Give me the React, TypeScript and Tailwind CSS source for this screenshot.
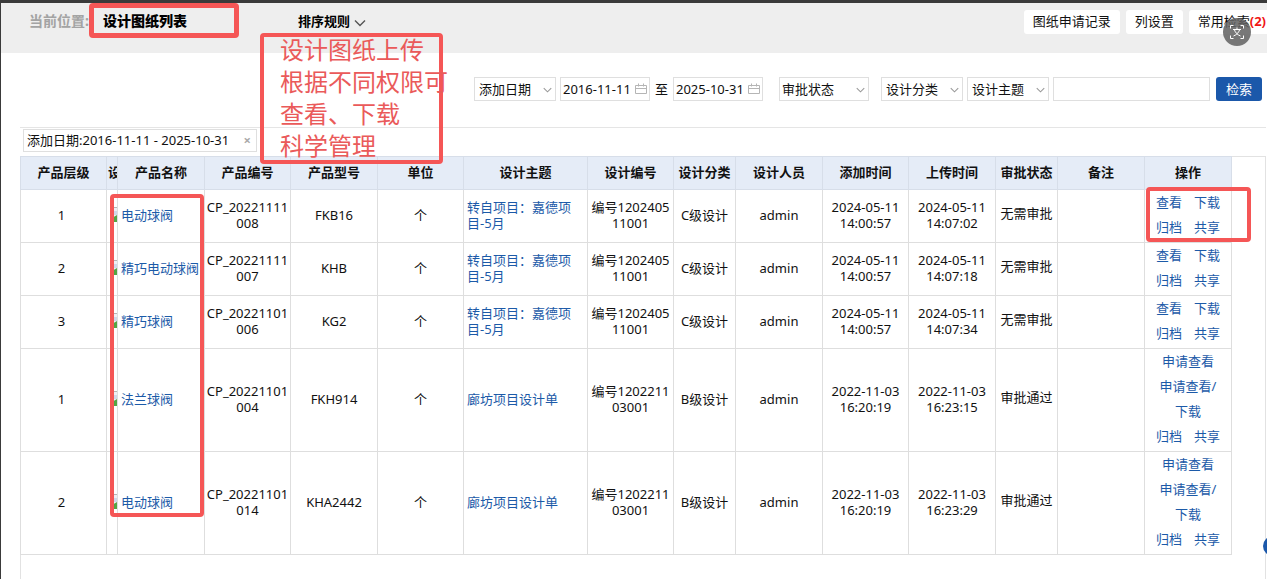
import type { ReactNode } from 'react';

type Row = {
  level: string;
  name: string;
  code: [string, string];
  model: string;
  theme: string[];
  designNo: [string, string];
  grade: string;
  added: [string, string];
  uploaded: [string, string];
  status: string;
  needsRequest: boolean;
};

const jiade = ['转自项目：嘉德项', '目-5月'];
const langfang = ['廊坊项目设计单'];

const rows: Row[] = [
  { level: '1', name: '电动球阀', code: ['CP_20221111', '008'], model: 'FKB16', theme: jiade, designNo: ['编号1202405', '11001'], grade: 'C级设计', added: ['2024-05-11', '14:00:57'], uploaded: ['2024-05-11', '14:07:02'], status: '无需审批', needsRequest: false },
  { level: '2', name: '精巧电动球阀', code: ['CP_20221111', '007'], model: 'KHB', theme: jiade, designNo: ['编号1202405', '11001'], grade: 'C级设计', added: ['2024-05-11', '14:00:57'], uploaded: ['2024-05-11', '14:07:18'], status: '无需审批', needsRequest: false },
  { level: '3', name: '精巧球阀', code: ['CP_20221101', '006'], model: 'KG2', theme: jiade, designNo: ['编号1202405', '11001'], grade: 'C级设计', added: ['2024-05-11', '14:00:57'], uploaded: ['2024-05-11', '14:07:34'], status: '无需审批', needsRequest: false },
  { level: '1', name: '法兰球阀', code: ['CP_20221101', '004'], model: 'FKH914', theme: langfang, designNo: ['编号1202211', '03001'], grade: 'B级设计', added: ['2022-11-03', '16:20:19'], uploaded: ['2022-11-03', '16:23:15'], status: '审批通过', needsRequest: true },
  { level: '2', name: '电动球阀', code: ['CP_20221101', '014'], model: 'KHA2442', theme: langfang, designNo: ['编号1202211', '03001'], grade: 'B级设计', added: ['2022-11-03', '16:20:19'], uploaded: ['2022-11-03', '16:23:29'], status: '审批通过', needsRequest: true },
];

const headings = ['产品层级', '设', '产品名称', '产品编号', '产品型号', '单位', '设计主题', '设计编号', '设计分类', '设计人员', '添加时间', '上传时间', '审批状态', '备注', '操作'];

const columns = ['w-[86px]', 'w-[11px]', 'w-[87px]', 'w-[86px]', 'w-[87px]', 'w-[86px]', 'w-[124px]', 'w-[86px]', 'w-[62px]', 'w-[87px]', 'w-[86px]', 'w-[87px]', 'w-[62px]', 'w-[87px]', 'w-[87px]'];

function Chevron({ className }: { className: string }) {
  return (
    <svg viewBox="0 0 12 8" className={className} fill="none" stroke="currentColor" aria-hidden="true">
      <path d="M1 1.5 6 6.5 11 1.5" strokeWidth="1.4" />
    </svg>
  );
}

function Filter({ label, width, inset }: { label: string; width: string; inset: string }) {
  return (
    <div className={`relative h-6 shrink-0 ${width}`}>
      <select aria-label={label} className={`h-full w-full appearance-none border border-[#dfdfdf] bg-white pb-px ${inset}`}>
        <option>{label}</option>
      </select>
      <Chevron className="pointer-events-none absolute right-1 top-2.5 h-[6px] w-[9px] text-[#999]" />
    </div>
  );
}

function DateBox({ label, value }: { label: string; value: string }) {
  return (
    <div className="flex h-6 w-[90px] shrink-0 items-center border border-[#dfdfdf] pl-0.5">
      <input aria-label={label} defaultValue={value} className="w-[72px] min-w-0 outline-none" />
      <svg viewBox="0 0 12 12" className="h-3 w-3 shrink-0 text-[#b5b5b5]" fill="none" stroke="currentColor" aria-hidden="true">
        <path d="M.5 2.500h11v8h-11zM.5 5.500h11M3.500 .5v3M8.500 .5v3" />
      </svg>
    </div>
  );
}

function Lines({ items }: { items: string[] }) {
  return (
    <>
      {items.map((item) => (
        <span key={item} className="block">{item}</span>
      ))}
    </>
  );
}

function Cell({ children, className = '' }: { children?: ReactNode; className?: string }) {
  return <td className={`border border-[#dedede] px-0 pb-0.5 pt-0 ${className}`}>{children}</td>;
}

function BrokenImage() {
  return (
    <svg viewBox="0 0 5 16" className="ml-auto h-4 w-[5px]" role="img" aria-label="设计图">
      <path d="M0 .5h5" stroke="#b5b5b5" />
      <path d="M0 1h5v14H0z" fill="#eef0f5" />
      <path d="M0 4h5v4H0z" fill="#cfd8ea" />
      <path d="M0 15V11l5-3v7z" fill="#55a544" />
    </svg>
  );
}

function Actions({ needsRequest }: { needsRequest: boolean }) {
  return (
    <div className="flex flex-col items-center leading-[25px] text-[#1c5aa8]">
      {needsRequest ? (
        <>
          <a href="#request-view">申请查看</a>
          <a href="#request-download" className="text-center"><Lines items={['申请查看/', '下载']} /></a>
        </>
      ) : (
        <div className="flex gap-3">
          <a href="#view">查看</a>
          <a href="#download">下载</a>
        </div>
      )}
      <div className="flex gap-3">
        <a href="#archive">归档</a>
        <a href="#share">共享</a>
      </div>
    </div>
  );
}

export default function App() {
  return (
    <div className="relative flex min-h-screen flex-col overflow-hidden border-l border-t-[3px] border-[#3a3a3a] bg-white font-['Noto_Sans','Noto_Sans_CJK_SC',sans-serif] text-[13px] leading-4 text-[#111]">
      <header className="flex h-[50px] items-start justify-between bg-[#eee] pl-7 pt-[7px]">
        <div className="flex h-6 items-center pb-0.5">
          <nav aria-label="当前位置" className="flex w-[269px] shrink-0 text-sm font-bold text-[#a3a3a3]">
            <span className="w-[74px]">当前位置:</span>
            <strong className="text-black">设计图纸列表</strong>
          </nav>
          <button type="button" className="flex items-center gap-1 font-bold text-black">
            排序规则
            <Chevron className="mt-1 h-2 w-3 text-[#555]" />
          </button>
        </div>
        <div className="-mr-2 flex shrink-0 gap-1.5">
          <button type="button" className="h-6 rounded-[3px] bg-white px-[9px] pb-0.5">图纸申请记录</button>
          <button type="button" className="h-6 rounded-[3px] bg-white px-[9px] pb-0.5">列设置</button>
          <button type="button" className="h-6 rounded-[3px] bg-white px-[9px] pb-0.5">常用检索<b className="text-[#f01515]">(2)</b></button>
        </div>
      </header>

      <main className="flex flex-1 flex-col pl-[19px] pr-px">
        <form className="flex h-[75px] items-start justify-end border-b border-[#e5e5e5] pr-1 pt-6" onSubmit={(e) => e.preventDefault()}>
          <Filter label="添加日期" width="w-[82px] mr-1" inset="pl-1" />
          <DateBox label="开始日期" value="2016-11-11" />
          <span className="mx-[5px] self-start leading-6">至</span>
          <DateBox label="结束日期" value="2025-10-31" />
          <Filter label="审批状态" width="w-[90px] ml-4 mr-3" inset="pl-0.5" />
          <Filter label="设计分类" width="w-[82px] mr-1" inset="pl-1" />
          <Filter label="设计主题" width="w-[82px] mr-1" inset="pl-1" />
          <input aria-label="关键词" className="mr-1.5 h-6 w-[157px] min-w-0 border border-[#dfdfdf] px-1 outline-none" />
          <button type="submit" className="h-6 w-[46px] shrink-0 rounded-[3px] bg-[#1b58aa] text-white">检索</button>
        </form>

        <div className="flex h-7 items-start pl-[3px] pt-px">
          <div className="flex h-[23px] items-center gap-3 border border-[#dfdfdf] px-[3px] pb-px">
            添加日期:2016-11-11 - 2025-10-31
            <button type="button" aria-label="清除日期" className="w-3 font-bold text-[#aaa]">×</button>
          </div>
        </div>

        <section className="flex-1 border-l border-r border-t border-[#e2e2e2] pr-[33px]">
          <table className="-ml-px -mt-px w-full table-fixed border-collapse text-center">
            <colgroup>
              {columns.map((width, i) => (
                <col key={i} className={width} />
              ))}
            </colgroup>
            <thead>
              <tr className="h-[33px] bg-[#e5ecf7]">
                {headings.map((heading, i) => (
                  <th key={heading} scope="col" className="overflow-hidden whitespace-nowrap border border-[#d7dee9] px-0 pb-0.5 pt-0 font-bold">
                    {i === 1 ? <span className="block pl-px text-left">{heading}</span> : heading}
                  </th>
                ))}
              </tr>
            </thead>
            <tbody>
              {rows.map((row, i) => (
                <tr key={i}>
                  <Cell className="pr-1">{row.level}</Cell>
                  <Cell><BrokenImage /></Cell>
                  <Cell className="whitespace-nowrap text-left"><a href="#product" className="pl-[3px] text-[#1c5aa8]">{row.name}</a></Cell>
                  <Cell><Lines items={row.code} /></Cell>
                  <Cell>{row.model}</Cell>
                  <Cell>个</Cell>
                  <Cell className="text-left"><a href="#theme" className="block pl-[3px] text-[#1c5aa8]"><Lines items={row.theme} /></a></Cell>
                  <Cell><Lines items={row.designNo} /></Cell>
                  <Cell>{row.grade}</Cell>
                  <Cell>admin</Cell>
                  <Cell><Lines items={row.added} /></Cell>
                  <Cell><Lines items={row.uploaded} /></Cell>
                  <Cell><span className="block pb-1">{row.status}</span></Cell>
                  <Cell />
                  <Cell><Actions needsRequest={row.needsRequest} /></Cell>
                </tr>
              ))}
            </tbody>
          </table>
        </section>
      </main>

      <button type="button" aria-label="翻译" className="absolute right-4 top-[15px] flex h-7 w-7 items-center justify-center rounded-full bg-[#606060]/85 text-white">
        <svg viewBox="0 0 16 16" className="h-4 w-4" fill="none" stroke="currentColor" aria-hidden="true">
          <path d="M1.500 4.500v-3h3M11.500 1.500h3v3M14.500 11.500v3h-3M4.500 14.500h-3v-3" />
          <path d="M4 5.500h8M8 3.500v2M5.500 6c.8 2.500 2.800 4.700 6 6M10.500 6c-.8 2.500-2.800 4.700-6 6" />
        </svg>
      </button>
      <button type="button" aria-label="展开" className="absolute -right-4 top-[533px] h-5 w-5 rounded-full bg-[#1b58aa]" />

      <div className="pointer-events-none absolute left-[88px] top-0 h-[35px] w-[150px] rounded-sm border-[5px] border-[#f55656]" />
      <div className="pointer-events-none absolute left-[259px] top-[30px] h-[131px] w-[183px] rounded-sm border-4 border-[#f55656]" />
      <div className="pointer-events-none absolute left-[279px] top-[31px] whitespace-nowrap text-2xl leading-8 text-[#ea5a5a]">
        <Lines items={['设计图纸上传', '根据不同权限可', '查看、下载', '科学管理']} />
      </div>
      <div className="pointer-events-none absolute left-[109px] top-[191px] h-[323px] w-[94px] rounded-sm border-4 border-[#f55656]" />
      <div className="pointer-events-none absolute right-4 top-[184px] h-[55px] w-[105px] rounded-sm border-4 border-[#f55656]" />
    </div>
  );
}
